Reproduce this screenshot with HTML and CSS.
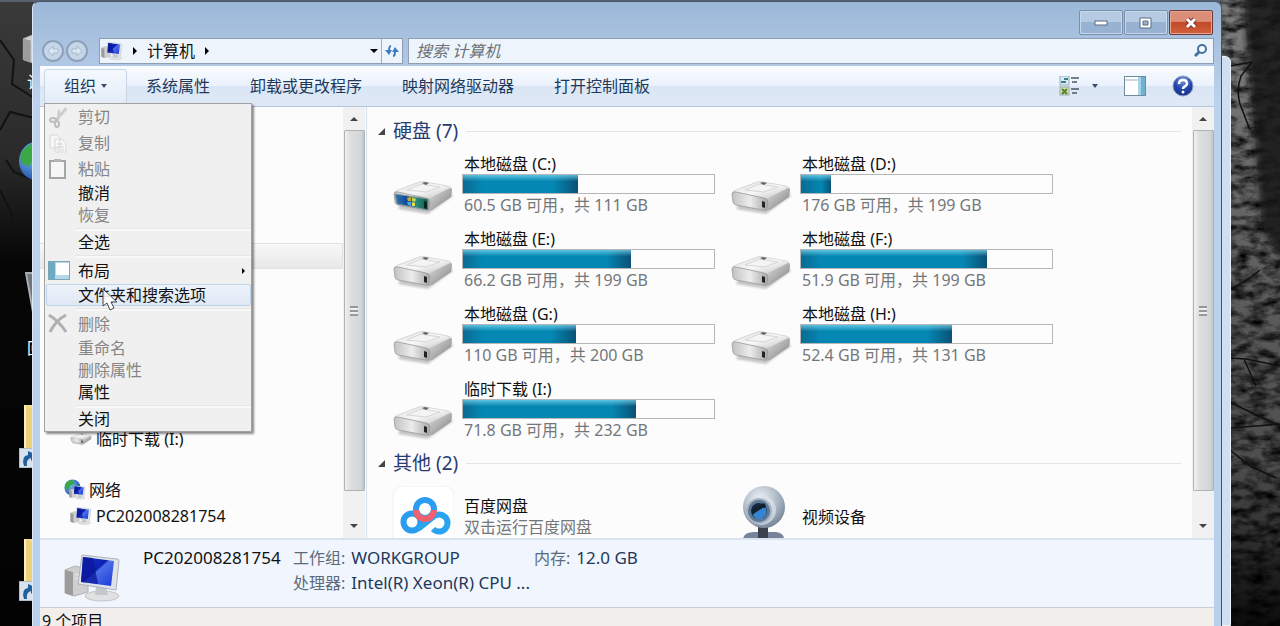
FILE: index.html
```html
<!DOCTYPE html>
<html lang="zh-CN">

<head>
    <meta charset="UTF-8">
    <meta name="viewport" content="width=device-width, initial-scale=1.0">
    <title>计算机</title>
    <link rel="stylesheet" href="styles.css">
</head>

<body>
    <!-- 公用图标 -->
    <svg class="defs" width="0" height="0" aria-hidden="true">
        <defs>
            <linearGradient id="metal" x1="0" y1="0" x2="1" y2="1">
                <stop offset="0" stop-color="#dedede" />
                <stop offset="0.5" stop-color="#f8f8f8" />
                <stop offset="1" stop-color="#bdbdbd" />
            </linearGradient>
            <linearGradient id="front" x1="0" y1="0" x2="1" y2="0">
                <stop offset="0" stop-color="#c2c2c2" />
                <stop offset="0.5" stop-color="#ececec" />
                <stop offset="1" stop-color="#a6a6a6" />
            </linearGradient>
            <linearGradient id="side" x1="0" y1="0" x2="1" y2="1">
                <stop offset="0" stop-color="#e2e2e2" />
                <stop offset="0.5" stop-color="#b0b0b0" />
                <stop offset="1" stop-color="#777" />
            </linearGradient>
            <linearGradient id="screen" x1="0" y1="0" x2="1" y2="1">
                <stop offset="0" stop-color="#1a35c8" />
                <stop offset="0.45" stop-color="#0d1fb0" />
                <stop offset="0.5" stop-color="#4a6fe8" />
                <stop offset="1" stop-color="#1c38d8" />
            </linearGradient>
            <linearGradient id="osFront" x1="0" y1="0" x2="1" y2="0">
                <stop offset="0" stop-color="#3a74b4" />
                <stop offset="0.35" stop-color="#0d4c94" />
                <stop offset="0.65" stop-color="#2b8a7c" />
                <stop offset="1" stop-color="#0d5a48" />
            </linearGradient>
            <linearGradient id="trees" x1="0" y1="0" x2="0" y2="1">
                <stop offset="0" stop-color="#7e7e7e" />
                <stop offset="0.4" stop-color="#616161" />
                <stop offset="0.75" stop-color="#4c4c4c" />
                <stop offset="0.9" stop-color="#242424" />
                <stop offset="1" stop-color="#0c0c0c" />
            </linearGradient>
            <linearGradient id="treesLeft" x1="0" y1="0" x2="0" y2="1">
                <stop offset="0" stop-color="#3a3a3a" />
                <stop offset="0.25" stop-color="#2a2a2a" />
                <stop offset="0.42" stop-color="#060606" />
                <stop offset="1" stop-color="#030303" />
            </linearGradient>
            <radialGradient id="ball" cx="0.4" cy="0.3" r="0.75">
                <stop offset="0" stop-color="#eef2f6" />
                <stop offset="0.6" stop-color="#a9b5c3" />
                <stop offset="1" stop-color="#707f92" />
            </radialGradient>
            <radialGradient id="help" cx="0.5" cy="0.2" r="0.9">
                <stop offset="0" stop-color="#7d9ae0" />
                <stop offset="0.5" stop-color="#2447ae" />
                <stop offset="1" stop-color="#13297a" />
            </radialGradient>
            <radialGradient id="earth" cx="0.35" cy="0.35" r="0.7">
                <stop offset="0" stop-color="#7cc4f0" />
                <stop offset="1" stop-color="#1b48a8" />
            </radialGradient>
            <filter id="soft">
                <feGaussianBlur stdDeviation="1.2" />
            </filter>
            <filter id="shade">
                <feGaussianBlur stdDeviation="3" />
            </filter>
            <filter id="grain" x="0" y="0" width="100%" height="100%">
                <feTurbulence type="fractalNoise" baseFrequency="0.06 0.12" numOctaves="4" seed="8" />
                <feColorMatrix values="0 0 0 0 0  0 0 0 0 0  0 0 0 0 0  2 0 0 0 -0.7" />
            </filter>
            <symbol id="drive" viewBox="0 0 62 36">
                <path d="M6 30L36 35 61 17 58 13 14 14Z" fill="#999" opacity=".55" filter="url(#soft)" />
                <path d="M3 13Q3 12 6 11L27 3Q30 2 34 3L56 7Q60 8 60 11L37 20 5 15Z" fill="url(#metal)" stroke="#c4c4c4" stroke-width=".6" />
                <path d="M36 20L58 9Q60 9 60 12L59 18 40 31 35 32Z" fill="url(#side)" />
                <path d="M2 15Q2 12 6 13L34 19Q38 20 38 23L37 29Q37 32 33 31L6 26Q3 25 3 23Z" fill="url(#front)" stroke="#999" stroke-width=".8" />
                <path d="M15 11L29 5 48 8 34 13Z" fill="#f4f4f4" stroke="#d6d6d6" />
                <path d="M30 4L33 3 37 4 34 6Z" fill="#666" />
                <path d="M32 22L35 23 35 29 32 28Z" fill="#222" />
            </symbol>
            <symbol id="drive-os" viewBox="0 0 62 36">
                <use href="#drive" width="62" height="36" />
                <path d="M3 15L36 20 36 31 5 25Z" fill="url(#osFront)" stroke="#83949c" />
                <path d="M15 19L19 18 19 22 16 22Z" fill="#d9a531" />
                <path d="M20 18L24 20 23 23 20 22Z" fill="#b8d84c" />
                <path d="M15 23L19 23 19 27 16 26Z" fill="#4fa3df" />
                <path d="M20 23L23 24 23 27 20 27Z" fill="#f0dc50" />
                <path d="M32 22L35 23 35 30 32 29Z" fill="#06251d" />
            </symbol>
            <symbol id="pc" viewBox="0 0 58 48">
                <path d="M1 16L11 12 24 15 24 38 10 42 1 39Z" fill="#cfcfcf" stroke="#b0b0b0" />
                <path d="M1 16L9 18 9 42 1 39Z" fill="#9c9c9c" />
                <path d="M11 21L20 19M11 25L20 23" stroke="#f0f0f0" />
                <ellipse cx="38" cy="42" rx="17" ry="5" fill="#dfe1e3" stroke="#c4c4c4" />
                <path d="M32 32L42 33 44 41 31 41Z" fill="#c4c8cc" />
                <path d="M18 1L53 5Q55 5 55 7L52 36 14 30Z" fill="#dfe3e8" stroke="#adb3ba" />
                <path d="M19 3L50 7 47 32 17 28Z" fill="url(#screen)" />
                <path d="M19 3L29 4 34 30 17 28Z" fill="#0a1798" opacity=".75" />
            </symbol>
            <symbol id="globe" viewBox="0 0 22 22">
                <circle cx="11" cy="11" r="10.5" fill="url(#earth)" />
                <path d="M3 5Q8 0 12 2L13 6 8 9 6 14 2 12Q0 8 3 5ZM13 9L19 8 20 13 15 19 12 15Z" fill="#39a845" />
            </symbol>
            <symbol id="folder" viewBox="0 0 30 46">
                <path d="M1 0H30V46H1Z" fill="#f3dc98" />
                <path d="M1 0L12 5V46H1Z" fill="#ecd07a" />
                <path d="M1 0V46" stroke="#fbeeb8" stroke-width="2" />
            </symbol>
            <symbol id="shortcut" viewBox="0 0 20 20">
                <path d="M0 0H20V20H0Z" fill="#d9e2ec" stroke="#8a97a5" />
                <path d="M5 18Q2 8 9 7V3L18 7 12 13V10Q7 11 8 18Z" fill="#215f9c" />
            </symbol>
        </defs>
    </svg>

    <div class="desktop">
        <svg class="wallpaper" viewBox="0 0 1280 626" preserveAspectRatio="none" aria-hidden="true">
            <rect x="0" y="2" width="34" height="624" fill="url(#treesLeft)" />
            <path d="M0 40L14 60 12 84 34 98M0 130L10 112 34 118M6 160L14 172 34 180M0 190L12 214 10 230" fill="none" stroke="#121212" stroke-width="2" />
            <rect x="1220" y="0" width="60" height="626" fill="url(#trees)" />
            <rect x="1220" y="0" width="60" height="626" filter="url(#grain)" />
            <path d="M1243 -10H1290V270L1262 230 1254 130 1248 60Z" fill="#151515" opacity=".85" filter="url(#shade)" />
            <path d="M1230 66L1252 62 1241 76Q1236 90 1240 104L1250 130M1230 290L1250 278 1260 270M1230 358L1246 359 1280 366M1244 359L1256 386M1230 402L1250 412 1280 426M1230 428L1280 424M1230 450L1250 466 1276 478" fill="none" stroke="#101010" stroke-width="1.5" />
        </svg>

        <div class="shortcut pc"><svg width="58" height="44"><use href="#pc" /></svg><span>计</span></div>
        <div class="shortcut net"><svg width="42" height="42"><use href="#globe" /></svg></div>
        <div class="shortcut bin">
            <svg width="46" height="48" viewBox="0 0 46 48"><path d="M1 1H45L38 40H8Z" fill="#6f757b" stroke="#a9adb1" stroke-width="2" /></svg>
            <span>回</span>
        </div>
        <div class="shortcut dir1"><svg width="30" height="46"><use href="#folder" /></svg></div>
        <div class="shortcut link1"><svg width="20" height="20"><use href="#shortcut" /></svg></div>
        <div class="shortcut dir2"><svg width="30" height="46"><use href="#folder" /></svg></div>
        <div class="shortcut link2"><svg width="20" height="20"><use href="#shortcut" /></svg></div>

        <div class="back-window"></div>

        <div class="window">
            <div class="titlebar">
                <button class="win-btn" aria-label="最小化"><svg width="14" height="12"><rect x="1" y="4" width="12" height="4" fill="#fff" stroke="#596b80" /></svg></button>
                <button class="win-btn" aria-label="最大化"><svg width="14" height="12"><path d="M1 1H12V11H1ZM4 4V8H9V4Z" fill="#fff" fill-rule="evenodd" stroke="#596b80" /></svg></button>
                <button class="win-btn close" aria-label="关闭"><svg width="14" height="12"><path d="M3 2L11 10M11 2L3 10" stroke="#7c3226" stroke-width="5" /><path d="M3 2L11 10M11 2L3 10" stroke="#fff" stroke-width="3" /></svg></button>
            </div>

            <div class="address-row">
                <div class="history">
                    <button class="round" aria-label="后退"><svg width="14" height="14"><path d="M7 2L2 7 7 12V9H12V5H7Z" fill="#dbe7f3" stroke="#a9bacd" /></svg></button>
                    <button class="round" aria-label="前进"><svg width="14" height="14"><path d="M7 2L12 7 7 12V9H2V5H7Z" fill="#dbe7f3" stroke="#a9bacd" /></svg></button>
                </div>
                <div class="address">
                    <svg width="22" height="20"><use href="#pc" /></svg>
                    <svg class="sep" width="6" height="8"><path d="M1 0L5 4 1 8Z" /></svg>
                    <a href="#">计算机</a>
                    <svg class="sep" width="6" height="8"><path d="M1 0L5 4 1 8Z" /></svg>
                    <button class="drop" aria-label="以前的位置"><svg width="8" height="4"><path d="M0 0H8L4 4Z" /></svg></button>
                    <button class="refresh" aria-label="刷新"><svg width="14" height="14"><path d="M0 6H7L4 11ZM7 8H14L10 3Z" fill="#3c7fc0" /><path d="M6 2Q4 2 4 7M8 12Q10 12 10 8" fill="none" stroke="#3c7fc0" stroke-width="2" /></svg></button>
                </div>
                <div class="search">
                    <input type="text" placeholder="搜索 计算机" aria-label="搜索 计算机">
                    <svg width="14" height="14"><circle cx="8" cy="5" r="4" fill="#f4faff" stroke="#42719e" stroke-width="2" /><path d="M5 8L1 12" stroke="#42719e" stroke-width="3" /></svg>
                </div>
            </div>

            <div class="toolbar">
                <button class="tool open">组织<svg width="6" height="4"><path d="M0 0H6L3 4Z" /></svg></button>
                <button class="tool">系统属性</button>
                <button class="tool">卸载或更改程序</button>
                <button class="tool">映射网络驱动器</button>
                <button class="tool">打开控制面板</button>
                <div class="tool-right">
                    <button aria-label="更改视图">
                        <svg width="21" height="20">
                            <rect x="1" y="0" width="9" height="9" fill="#d8edf0" stroke="#9ab" />
                            <path d="M2 6H7M5 3H9" stroke="#37818e" stroke-width="2" />
                            <rect x="1" y="11" width="9" height="8" fill="#d3e29a" stroke="#9ab" />
                            <path d="M3 13L8 18M8 13L3 18" stroke="#56803a" stroke-width="2" />
                            <path d="M12 2H20M13 6H18M12 13H20M13 17H18" stroke="#4b5866" stroke-width="1.5" />
                        </svg>
                        <svg class="caret" width="6" height="4"><path d="M0 0H6L3 4Z" /></svg>
                    </button>
                    <button aria-label="显示预览窗格">
                        <svg width="22" height="20">
                            <rect x="0.5" y="0.5" width="21" height="19" fill="#fff" stroke="#6f8ba0" />
                            <path d="M1 4H14" stroke="#9fb0bd" />
                            <rect x="14" y="1" width="7" height="18" fill="#6fb1d0" />
                            <rect x="14" y="1" width="3" height="18" fill="#a7d3e6" />
                        </svg>
                    </button>
                    <button aria-label="获取帮助">
                        <svg width="22" height="22">
                            <circle cx="11" cy="11" r="10" fill="url(#help)" stroke="#8f9cc0" />
                            <path d="M7 9Q7 5 11 5T15 9Q15 10 12 12 11 13 11 14" fill="none" stroke="#fff" stroke-width="2.5" />
                            <circle cx="11" cy="17" r="1.5" fill="#fff" />
                        </svg>
                    </button>
                </div>

                <ul class="menu">
                    <li><button class="with-icon" disabled><svg width="20" height="20"><path d="M18 1L8 13M11 3L10 13" stroke="#c6c6c6" stroke-width="2" /><path d="M18 1L9 10 11 12 19 3Z" fill="#cfcfcf" /><ellipse cx="5" cy="13" rx="3" ry="2" fill="none" stroke="#bdbdbd" stroke-width="2" /><ellipse cx="9" cy="17" rx="2" ry="3" fill="none" stroke="#bdbdbd" stroke-width="2" /></svg>剪切</button></li>
                    <li><button class="with-icon" disabled><svg width="20" height="20"><path d="M2 2H9L12 5V15H2ZM7 6H14L18 10V19H7Z" fill="#f6f6f6" stroke="#d8d8d8" /><path d="M9 11H15M9 14H16M9 17H16" stroke="#d2d2d2" /></svg>复制</button></li>
                    <li><button class="with-icon" disabled><svg width="20" height="20"><rect x="2" y="2" width="15" height="17" fill="#f7f7f7" stroke="#a5a5a5" stroke-width="2" /><path d="M6 0H13V3H6Z" fill="#b5b5b5" /></svg>粘贴</button></li>
                    <li><button>撤消</button></li>
                    <li><button disabled>恢复</button></li>
                    <li class="line"></li>
                    <li><button>全选</button></li>
                    <li class="line"></li>
                    <li><button class="with-icon"><svg width="22" height="20"><rect x="0.5" y="0.5" width="21" height="18" fill="#b5d9e8" stroke="#7ea4b8" /><rect x="1" y="1" width="6" height="17" fill="#6daac6" /><rect x="8" y="2" width="13" height="12" fill="#fff" /></svg>布局<svg class="sub" width="5" height="6"><path d="M1 0L4 3 1 6Z" /></svg></button></li>
                    <li><button class="hot">文件夹和搜索选项</button></li>
                    <li class="line"></li>
                    <li><button class="with-icon" disabled><svg width="20" height="20"><path d="M1 1Q11 7 18 18M18 1Q8 6 2 18" fill="none" stroke="#b0b0b0" stroke-width="3" /></svg>删除</button></li>
                    <li><button disabled>重命名</button></li>
                    <li><button disabled>删除属性</button></li>
                    <li><button>属性</button></li>
                    <li class="line"></li>
                    <li><button>关闭</button></li>
                </ul>
            </div>

            <div class="content">
                <div class="tree">
                    <ul>
                        <li class="selected"></li>
                        <li class="disk"><svg width="22" height="14"><use href="#drive" /></svg>临时下载 (I:)</li>
                        <li class="network"><svg width="22" height="22"><use href="#globe" width="17" height="17" /><use href="#pc" x="5" y="5" width="17" height="17" /></svg>网络</li>
                        <li class="computer"><svg width="22" height="18"><use href="#pc" /></svg>PC202008281754</li>
                    </ul>
                </div>
                <div class="scrollbar">
                    <svg width="8" height="4"><path d="M4 0L8 4H0Z" /></svg>
                    <div class="thumb"><i></i></div>
                    <svg width="8" height="4"><path d="M0 0H8L4 4Z" /></svg>
                </div>

                <div class="main">
                    <h2><svg width="7" height="7"><path d="M7 0V7H0Z" /></svg>硬盘 (7)</h2>
                    <div class="items">
                        <div class="item">
                            <svg width="62" height="36"><use href="#drive-os" /></svg>
                            <div class="info">
                                <p>本地磁盘 (C:)</p>
                                <div class="bar"><div style="width: 46%"></div></div>
                                <p class="grey">60.5 GB 可用，共 111 GB</p>
                            </div>
                        </div>
                        <div class="item">
                            <svg width="62" height="36"><use href="#drive" /></svg>
                            <div class="info">
                                <p>本地磁盘 (D:)</p>
                                <div class="bar"><div style="width: 12%"></div></div>
                                <p class="grey">176 GB 可用，共 199 GB</p>
                            </div>
                        </div>
                        <div class="item">
                            <svg width="62" height="36"><use href="#drive" /></svg>
                            <div class="info">
                                <p>本地磁盘 (E:)</p>
                                <div class="bar"><div style="width: 67%"></div></div>
                                <p class="grey">66.2 GB 可用，共 199 GB</p>
                            </div>
                        </div>
                        <div class="item">
                            <svg width="62" height="36"><use href="#drive" /></svg>
                            <div class="info">
                                <p>本地磁盘 (F:)</p>
                                <div class="bar"><div style="width: 74%"></div></div>
                                <p class="grey">51.9 GB 可用，共 199 GB</p>
                            </div>
                        </div>
                        <div class="item">
                            <svg width="62" height="36"><use href="#drive" /></svg>
                            <div class="info">
                                <p>本地磁盘 (G:)</p>
                                <div class="bar"><div style="width: 45%"></div></div>
                                <p class="grey">110 GB 可用，共 200 GB</p>
                            </div>
                        </div>
                        <div class="item">
                            <svg width="62" height="36"><use href="#drive" /></svg>
                            <div class="info">
                                <p>本地磁盘 (H:)</p>
                                <div class="bar"><div style="width: 60%"></div></div>
                                <p class="grey">52.4 GB 可用，共 131 GB</p>
                            </div>
                        </div>
                        <div class="item">
                            <svg width="62" height="36"><use href="#drive" /></svg>
                            <div class="info">
                                <p>临时下载 (I:)</p>
                                <div class="bar"><div style="width: 69%"></div></div>
                                <p class="grey">71.8 GB 可用，共 232 GB</p>
                            </div>
                        </div>
                    </div>

                    <h2><svg width="7" height="7"><path d="M7 0V7H0Z" /></svg>其他 (2)</h2>
                    <div class="items">
                        <div class="item other">
                            <svg width="62" height="62">
                                <rect x="1" y="0" width="61" height="66" rx="10" fill="#fff" stroke="#f0f0f0" />
                                <g fill="none" stroke-width="6">
                                    <circle cx="20" cy="36" r="8.5" stroke="#2a9cf0" />
                                    <path d="M26 43L41 31A8.500 8.500 0 1 1 41 43" stroke="#2aa4f0" />
                                    <circle cx="33" cy="23" r="9" stroke="#2c9df0" />
                                    <path d="M24 24A9 9 0 0 0 42 24" stroke="#f2606f" />
                                </g>
                            </svg>
                            <div class="info">
                                <p>百度网盘</p>
                                <p class="grey">双击运行百度网盘</p>
                            </div>
                        </div>
                        <div class="item other">
                            <svg width="62" height="62">
                                <path d="M13 53Q14 46 24 46H46Q54 47 54 53Z" fill="#76839a" />
                                <path d="M28 40H38V52H28Z" fill="#39424e" />
                                <circle cx="34" cy="21" r="21" fill="url(#ball)" />
                                <circle cx="31" cy="24" r="15" fill="#dce3ea" opacity=".7" />
                                <circle cx="29" cy="25" r="12" fill="#5f7894" stroke="#a5b4c4" stroke-width="2" />
                                <circle cx="29" cy="25" r="8" fill="#17293e" />
                                <path d="M23 29Q28 20 36 22Q38 30 31 33Q25 34 23 29Z" fill="#3685d0" />
                                <path d="M22 23L34 17 36 20 23 28Z" fill="#132030" />
                            </svg>
                            <div class="info">
                                <p>视频设备</p>
                            </div>
                        </div>
                    </div>
                </div>
                <div class="scrollbar">
                    <svg width="8" height="4"><path d="M4 0L8 4H0Z" /></svg>
                    <div class="thumb"><i></i></div>
                    <svg width="8" height="4"><path d="M0 0H8L4 4Z" /></svg>
                </div>
            </div>

            <div class="details">
                <svg width="58" height="48"><use href="#pc" /></svg>
                <p class="name">PC202008281754</p>
                <dl>
                    <dt>工作组:</dt>
                    <dd>WORKGROUP</dd>
                    <dt>处理器:</dt>
                    <dd>Intel(R) Xeon(R) CPU ...</dd>
                </dl>
                <dl>
                    <dt>内存:</dt>
                    <dd>12.0 GB</dd>
                </dl>
            </div>
            <div class="status"><span>9 个项目</span></div>
        </div>

        <svg class="cursor" width="16" height="24" aria-hidden="true"><path d="M1 1V18L5 15 8 22 12 20 9 14H15Z" fill="#fff" fill-opacity=".9" stroke="#444" /></svg>
    </div>
</body>

</html>
```

FILE: styles.css
```css
* {
    padding: 0;
    margin: 0;
    box-sizing: border-box;
}

body {
    font: 16px/20px "Noto Sans", "Noto Sans CJK SC", sans-serif;
    color: #111;
    background: #0a0a0a;
}

ul {
    list-style: none;
}

svg {
    display: block;
    flex: none;
}

button {
    font: inherit;
    color: inherit;
    border: none;
    background: none;
}

.defs {
    position: absolute;
}

.desktop {
    position: relative;
    height: 100vh;
    overflow: hidden;
    display: flex;
    background: #59616d;
}

.wallpaper {
    position: absolute;
    width: 100%;
    height: 100%;
}

/* 桌面图标 */
.shortcut {
    position: absolute;
    color: #fff;
}

.pc {
    left: 20px;
    top: 24px;
}

.pc span,
.bin span {
    display: block;
    margin: 4px 0 0 7px;
}

.net {
    left: 18px;
    top: 140px;
}

.bin {
    left: 25px;
    top: 272px;
}

.bin span {
    margin: 18px 0 0 2px;
}

.dir1 {
    left: 24px;
    top: 405px;
}

.link1 {
    left: 19px;
    top: 448px;
}

.dir2 {
    left: 24px;
    top: 539px;
}

.link2 {
    left: 19px;
    top: 581px;
}

.back-window {
    position: absolute;
    top: 56px;
    right: 49px;
    bottom: 0;
    width: 40px;
    border: 1px solid #eef4fb;
    border-radius: 0 6px 0 0;
    background: #cfdff1;
}

/* 窗口 */
.window {
    position: relative;
    flex: 1;
    min-width: 0;
    display: flex;
    flex-direction: column;
    margin: 1px 58px 0 32px;
    padding: 0 7px;
    border: 1px solid #45566b;
    border-left-color: #dce8f6;
    border-bottom: none;
    border-radius: 7px 7px 0 0;
    background: linear-gradient(#9cb8d8, #a9c2e0 40px, #bdd2ec 100px, #b7d0ec);
}

.titlebar {
    height: 36px;
    display: flex;
    justify-content: flex-end;
    align-items: flex-start;
    gap: 1px;
    padding: 8px 1px 0 0;
}

.win-btn {
    display: flex;
    justify-content: center;
    align-items: center;
    width: 44px;
    height: 25px;
    border: 1px solid #7890ac;
    border-radius: 2px;
    box-shadow: inset 0 0 0 1px #c6d8ec;
    background: linear-gradient(#b5cae3 50%, #98b3d2 50%);
}

.close {
    border-color: #6d3a38;
    box-shadow: inset 0 0 0 1px #e5a594;
    background: linear-gradient(#dc8d78 45%, #c24a28 50%, #d2603c);
}

.address-row {
    display: flex;
    height: 28px;
    padding-bottom: 2px;
}

.history {
    display: flex;
    gap: 2px;
    align-items: center;
    width: 59px;
    padding-left: 2px;
}

.round {
    display: flex;
    justify-content: center;
    align-items: center;
    width: 22px;
    height: 22px;
    border: 2px solid #8ea1b8;
    border-radius: 50%;
    background: #c6d6e9;
}

.address,
.search {
    display: flex;
    align-items: center;
    border: 1px solid #8e9fb4;
    background: #edf4fc;
}

.address {
    width: 304px;
    gap: 9px;
    padding-left: 1px;
    margin-right: 5px;
}

.address a {
    color: #111;
    text-decoration: none;
}

.drop {
    display: flex;
    margin-left: auto;
}

.refresh {
    display: flex;
    justify-content: center;
    align-items: center;
    align-self: stretch;
    width: 21px;
    margin-left: -6px;
    border-left: 1px solid #9fb0c5;
}

.search {
    flex: 1;
    padding: 0 5px 0 7px;
}

.search input {
    flex: 1;
    min-width: 0;
    border: none;
    outline: none;
    background: none;
    font: inherit;
    font-style: italic;
}

.search input::placeholder {
    color: #6b7178;
}

.toolbar {
    position: relative;
    display: flex;
    align-items: center;
    height: 41px;
    padding: 0 4px;
    border-bottom: 1px solid #b5c6dc;
    color: #1e395b;
    background: linear-gradient(#f9fcff, #eaf2fc 50%, #dae6f5 50%, #dfe9f6);
}

.tool {
    height: 35px;
    padding: 0 20px;
    white-space: nowrap;
}

.open {
    display: flex;
    align-items: center;
    gap: 5px;
    width: 83px;
    margin-right: -1px;
    padding: 0 19px;
    border: 1px solid #c9d6e6;
    border-radius: 3px;
    background: linear-gradient(#f5f9fe, #e3ecf8);
}

.open svg,
.caret {
    fill: #3c4f68;
}

.tool-right {
    display: flex;
    gap: 26px;
    margin-left: auto;
    padding-right: 16px;
}

.tool-right button {
    display: flex;
    align-items: center;
    gap: 12px;
}

/* 组织菜单 */
.menu {
    position: absolute;
    left: 4px;
    top: 37px;
    z-index: 2;
    width: 208px;
    padding-bottom: 1px;
    border: 1px solid #a2a2a2;
    box-shadow: 2px 2px 2px rgba(0, 0, 0, .45);
    background: #f0f0f0;
    color: #111;
}

.menu button {
    display: flex;
    align-items: center;
    width: 205px;
    height: 22px;
    margin-left: 1px;
    padding-left: 31px;
    border: 1px solid transparent;
    border-radius: 2px;
    text-align: left;
}

.menu button:disabled {
    color: #858585;
}

.menu .with-icon {
    height: 26px;
    gap: 10px;
    padding-left: 1px;
}

.menu .with-icon svg:first-child {
    width: 20px;
    overflow: visible;
}

.menu .sub {
    margin: 0 4px 0 auto;
}

.menu .hot {
    border-color: #bdd3ea;
    background: linear-gradient(#eef3fa, #dfe8f5);
}

.line {
    height: 5px;
    margin-left: 30px;
    padding-top: 2px;
}

.line::before {
    content: "";
    display: block;
    height: 2px;
    border-top: 1px solid #e6e6e6;
    background: #f8f8f8;
}

.content {
    flex: 1;
    min-height: 0;
    display: flex;
    background: #fcfcfc;
}

.tree {
    width: 303px;
}

.tree li {
    display: flex;
    align-items: center;
    gap: 4px;
    height: 26px;
    padding-left: 30px;
}

.tree .selected {
    margin-top: 136px;
    border: 1px solid #e2e2e2;
    border-left: none;
    background: linear-gradient(#f8f8f8, #e8e8e8);
}

.tree .disk {
    margin-top: 157px;
}

.tree .network {
    margin-top: 25px;
    padding-left: 24px;
    gap: 3px;
}

.scrollbar {
    display: flex;
    flex-direction: column;
    align-items: center;
    width: 22px;
    padding: 10px 0;
    background: #f1f1f1;
}

.scrollbar svg {
    fill: #444;
}

.thumb {
    flex: 1;
    display: flex;
    justify-content: center;
    align-items: center;
    width: 21px;
    margin: 9px 0 33px;
    border: 1px solid #b0b3b6;
    border-radius: 1px;
    background: linear-gradient(90deg, #f0f0f0, #dcdedf 30%, #d3d6d8 85%, #c2c5c7);
}

.thumb i {
    width: 8px;
    height: 10px;
    background: repeating-linear-gradient(#95999c 0 2px, #eee 2px 4px);
}

.main {
    flex: 1;
    min-width: 0;
    overflow: hidden;
    margin-left: 1px;
    padding: 12px 11px 0;
    border-left: 1px solid #d5e2ee;
}

.main h2 {
    display: flex;
    align-items: center;
    gap: 8px;
    height: 24px;
    font-size: 19px;
    font-weight: normal;
    color: #2a3b74;
}

.main h2 svg {
    fill: #444;
}

.main h2::after {
    content: "";
    flex: 1;
    height: 1px;
    background: #e2e4e6;
}

.items {
    display: grid;
    grid-template-columns: repeat(auto-fill, 338px);
    row-gap: 13px;
    padding: 11px 0 10px 14px;
}

.item {
    display: flex;
    gap: 8px;
    align-items: center;
    height: 62px;
}

.item > svg {
    margin-top: 24px;
}

.other > svg {
    margin-top: 0;
}

.info {
    width: 253px;
}

.info p {
    padding-left: 2px;
}

.info .grey {
    height: 22px;
    line-height: 22px;
    color: #74777a;
}

.bar {
    height: 20px;
    border: 1px solid #b4b6b8;
    background: #fdfdfd;
}

.bar div {
    height: 100%;
    background: linear-gradient(rgba(130, 220, 245, .7), rgba(130, 220, 245, 0) 35%), linear-gradient(90deg, #0b6a92, #0488b3 20px, #0488b3 calc(100% - 25px), #0a5175);
}

.details {
    display: flex;
    height: 70px;
    padding: 8px 24px;
    border-top: 2px solid #d8e3ee;
    border-bottom: 1px solid #c9ced5;
    background: #f0f5fe;
}

.details > svg {
    margin-top: 6px;
}

.details .name {
    width: 150px;
    padding-left: 21px;
    margin-right: 21px;
    font-size: 17px;
}

.details dl {
    display: grid;
    grid-template-columns: auto auto;
    grid-auto-rows: 20px;
    gap: 5px 6px;
    margin-right: 4px;
    color: #1e395b;
}

.details dt {
    color: #5c6b7c;
}

.details dd {
    font-size: 17px;
}

.status {
    height: 18px;
    overflow: hidden;
    padding: 3px 2px 0;
    background: #f1eeec;
}

.cursor {
    position: absolute;
    left: 102px;
    top: 288px;
    z-index: 3;
}
```
